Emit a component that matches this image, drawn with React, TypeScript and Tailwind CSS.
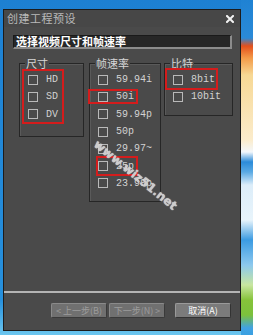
import React from 'react';

const cjk = '"Noto Sans CJK SC", "Noto Sans", sans-serif';
const mono = '"Liberation Mono", "Noto Sans CJK SC", monospace';

const Box: React.FC = () => (
  <span className="w-[10px] h-[10px] border border-[#b9b9b9] shrink-0" />
);

const Group: React.FC<{ title: string; items: string[]; className: string }> = ({ title, items, className }) => (
  <div className={`relative border border-[#262626] shadow-[inset_1px_1px_0_#5a5a5a] ${className}`}>
    <span
      className="absolute -top-[9px] left-[5px] bg-[#4a4a4a] px-[1px] text-[11px] leading-[16px] text-[#d6d6d6]"
      style={{ fontFamily: cjk }}
    >
      {title}
    </span>
    <div className="flex flex-col pt-[7px] pl-[8px]">
      {items.map((item) => (
        <div key={item} className="flex items-center h-[17.3px]">
          <Box />
          <span className="ml-[8px] text-[10px] text-[#d2d2d2]" style={{ fontFamily: mono }}>
            {item}
          </span>
        </div>
      ))}
    </div>
  </div>
);

const App: React.FC = () => {
  const marks = [
    'left-[22px] top-[69px] w-[42px] h-[55px]',
    'left-[88px] top-[89px] w-[50px] h-[15px]',
    'left-[96px] top-[156px] w-[42px] h-[20px]',
    'left-[165px] top-[68px] w-[53px] h-[22px]',
  ];

  return (
    <div className="relative w-[253px] h-[335px] overflow-hidden flex bg-[linear-gradient(to_bottom,#1d80d2_0px,#2790dc_300px,#6cc6ef_335px)]">
      <div className="w-[3px] shrink-0" />
      <div
        className="mt-[9px] w-[238px] h-[322px] shrink-0 flex flex-col bg-[#4a4a4a] border border-[#1c1c1c]"
        style={{ fontFamily: cjk }}
      >
        {/* title bar */}
        <div className="h-[17px] flex items-center justify-between pl-[3px] pr-[6px] bg-[#474747]">
          <span className="text-[11px] text-[#b9b9b9] tracking-[0.5px]">创建工程预设</span>
          <svg width="8" height="8" viewBox="0 0 8 8">
            <path d="M1 1 L7 7 M7 1 L1 7" stroke="#f2f2f2" strokeWidth="2" strokeLinecap="square" />
          </svg>
        </div>

        {/* header */}
        <div className="mt-[8px] ml-[9px] w-[219px] h-[14px] flex items-center bg-[#272727] border-t border-l border-[#1a1a1a] border-r-2 border-b-2 border-r-[#8c8c8c] border-b-[#8c8c8c]">
          <span className="ml-[2px] text-[11px] font-bold text-white leading-none">选择视频尺寸和帧速率</span>
        </div>

        {/* option groups */}
        <div className="mt-[14px] ml-[15px] flex items-start">
          <Group title="尺寸" items={['HD', 'SD', 'DV']} className="w-[65px] h-[74px]" />
          <Group
            title="帧速率"
            items={['59.94i', '50i', '59.94p', '50p', '29.97~', '25p', '23.98p']}
            className="ml-[5px] w-[72px] h-[139px]"
          />
          <Group title="比特" items={['8bit', '10bit']} className="ml-[3px] w-[69px] h-[53px]" />
        </div>

        <div className="flex-1" />

        {/* separator */}
        <div className="h-[2px] bg-[#b4b4b4]" />

        {/* buttons */}
        <div className="mt-[10px] mb-[12px] flex justify-end pr-[9px]">
          <button className="w-[56px] h-[15px] text-[9px] leading-none text-[#9c9c9c] bg-[#707070] border border-t-[#8a8a8a] border-l-[#8a8a8a] border-r-[#3a3a3a] border-b-[#3a3a3a] rounded-[2px]">
            &lt; 上一步(B)
          </button>
          <button className="ml-[2px] w-[56px] h-[15px] text-[9px] leading-none text-[#9c9c9c] bg-[#707070] border border-t-[#8a8a8a] border-l-[#8a8a8a] border-r-[#3a3a3a] border-b-[#3a3a3a] rounded-[2px]">
            下一步(N) &gt;
          </button>
          <button className="ml-[10px] w-[56px] h-[15px] text-[9px] leading-none text-white bg-[#7b7b7b] border border-t-[#9a9a9a] border-l-[#9a9a9a] border-r-[#333333] border-b-[#333333] rounded-[2px]">
            取消(A)
          </button>
        </div>
      </div>

      {/* desktop wallpaper strip */}
      <div className="flex-1 h-full bg-[linear-gradient(to_bottom,#1f82d3_0px,#2a8ad8_38px,#e4501c_46px,#f39a48_58px,#f7d894_75px,#fbeccc_140px,#f3f7fb_152px,#2b8bd9_162px,#5aaae4_172px,#dcedf9_185px,#e8f4fb_220px,#3b9be2_240px,#8cc8ee_265px,#c8e6a0_285px,#86c33a_300px,#7cc13c_315px,#41a2e4_328px,#3aa0e0_335px)]" />

      {/* red annotation boxes */}
      {marks.map((m) => (
        <div key={m} className={`absolute border-2 border-[#d41c1c] ${m}`} />
      ))}

      {/* watermark */}
      <span
        className="absolute left-[84px] top-[166px] text-[12px] font-bold text-[#c8c8c8]/90 rotate-[39deg] origin-center [text-shadow:0_0_1px_#ffffff]"
        style={{ fontFamily: '"DejaVu Sans", sans-serif' }}
      >
        www.wiz51.net
      </span>
    </div>
  );
};

export default App;
